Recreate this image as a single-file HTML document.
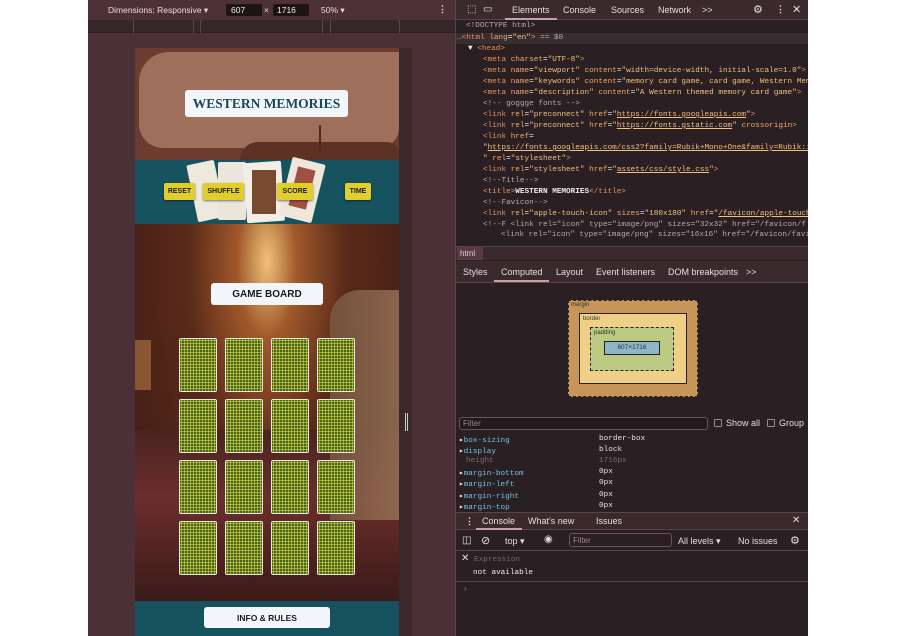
<!DOCTYPE html>
<html><head><meta charset="utf-8"><style>
*{box-sizing:border-box;margin:0;padding:0}
body{width:900px;height:636px;background:#fff;position:relative;overflow:hidden;font-family:"Liberation Sans",sans-serif}
.a{position:absolute}
.mono{font-family:"Liberation Mono",monospace;font-size:7.7px;white-space:nowrap}
.btn{position:absolute;background:#e0cf2a;border-radius:2px;font-weight:bold;font-size:7px;color:#1a1a1a;display:flex;align-items:center;justify-content:center;box-shadow:0 1px 2px rgba(0,0,0,.5)}
.card{position:absolute;width:38px;height:54px;border:1.5px solid #e8e8e0;border-radius:2px;background:#6f8b2e;background-image:radial-gradient(#c9c43a 0.8px,transparent 1px),radial-gradient(#2f4a14 0.7px,transparent 1px);background-size:3px 3px,3px 3px;background-position:0 0,1.5px 1.5px}
.wbtn{position:absolute;background:#f2f6fa;border-radius:3px;font-weight:bold;color:#1b1b1b;display:flex;align-items:center;justify-content:center}
.t{color:#e7dede;font-size:9px}
.tag{color:#e3935f}.at{color:#f2a76a}.av{color:#f1c080}.cm{color:#b9a9ab}.tx{color:#eee}
.p{color:#6fc3e0}.v{color:#e8e0e0}
#dt{position:absolute;left:455px;top:0;width:353px;height:636px;overflow:hidden;background:#2a1f22;border-left:1px solid #5a4448}
#dt .a{margin-left:-455px}
</style></head><body>
<!-- browser left region -->
<div class="a" style="left:88px;top:0;width:367px;height:636px;background:#4b3137"></div>
<div class="a" style="left:88px;top:0;width:367px;height:20px;background:#4e3039"></div>
<div class="a t" style="left:108px;top:5px;font-size:8.5px">Dimensions: Responsive ▾</div>
<div class="a" style="left:226px;top:4px;width:36px;height:12px;background:#1e1416;border-radius:2px;color:#eee;font-size:8.5px;padding-left:5px;line-height:12px">607</div>
<div class="a t" style="left:264px;top:5px;font-size:8.5px">×</div>
<div class="a" style="left:273px;top:4px;width:36px;height:12px;background:#1e1416;border-radius:2px;color:#eee;font-size:8.5px;padding-left:4px;line-height:12px">1716</div>
<div class="a t" style="left:321px;top:5px;font-size:8.5px">50% ▾</div>
<div class="a t" style="left:438px;top:4px;font-weight:bold">⋮</div>
<div class="a" style="left:88px;top:20px;width:367px;height:13px;background:#35262a;border-bottom:1px solid #2a1e21"></div>
<div class="a" style="left:133px;top:20px;width:1px;height:13px;background:#5a464a"></div>
<div class="a" style="left:193px;top:20px;width:1px;height:13px;background:#5a464a"></div>
<div class="a" style="left:200px;top:20px;width:1px;height:13px;background:#5a464a"></div>
<div class="a" style="left:322px;top:20px;width:1px;height:13px;background:#5a464a"></div>
<div class="a" style="left:330px;top:20px;width:1px;height:13px;background:#5a464a"></div>
<div class="a" style="left:399px;top:20px;width:1px;height:13px;background:#5a464a"></div>
<div class="a" style="left:399px;top:48px;width:13px;height:588px;background:#3b282c"></div>
<div class="a" style="left:405px;top:413px;width:1px;height:18px;background:#ccc"></div>
<div class="a" style="left:407px;top:413px;width:1px;height:18px;background:#ccc"></div>

<!-- page -->
<div class="a" style="left:135px;top:48px;width:264px;height:112px;background:#6a3d2e"></div>
<div class="a" style="left:139px;top:52px;width:260px;height:96px;background:#9e6f5b;border-radius:30px 0 20px 24px"></div>
<div class="a" style="left:240px;top:142px;width:159px;height:18px;background:#5b3224;border-radius:30px 20px 0 0"></div>
<div class="a" style="left:319px;top:125px;width:2px;height:25px;background:#4a2a1e"></div>
<div class="a" style="left:185px;top:90px;width:163px;height:27px;background:#f2f6fa;border-radius:3px;display:flex;align-items:center;justify-content:center;font-family:'Liberation Serif',serif;font-weight:bold;font-size:13.5px;color:#184a52">WESTERN MEMORIES</div>
<div class="a" style="left:135px;top:160px;width:264px;height:64px;background:#17535e"></div>
<div class="a" style="left:192px;top:162px;width:28px;height:58px;background:#efe8dc;transform:rotate(-12deg);border-radius:2px"></div>
<div class="a" style="left:218px;top:162px;width:28px;height:58px;background:#ece6da;border-radius:2px"></div>
<div class="a" style="left:245px;top:162px;width:38px;height:60px;background:#f2eee6;border-radius:2px;transform:rotate(-4deg)"></div>
<div class="a" style="left:252px;top:170px;width:24px;height:44px;background:#7a4a30"></div>
<div class="a" style="left:285px;top:160px;width:34px;height:60px;background:#efe7dc;transform:rotate(14deg);border-radius:2px"></div>
<div class="a" style="left:293px;top:168px;width:18px;height:40px;background:#a05040;transform:rotate(14deg)"></div>
<div class="btn" style="left:164px;top:183px;width:31px;height:17px">RESET</div>
<div class="btn" style="left:203px;top:183px;width:41px;height:17px">SHUFFLE</div>
<div class="btn" style="left:277px;top:183px;width:36px;height:17px">SCORE</div>
<div class="btn" style="left:345px;top:183px;width:26px;height:17px">TIME</div>

<div class="a" style="left:135px;top:224px;width:264px;height:377px;background:radial-gradient(ellipse at 50% 10%,#f0c27a 0,#a0582a 16%,#5a2a1a 42%,#3a1a14 100%)"></div>
<div class="a" style="left:135px;top:430px;width:264px;height:171px;background:linear-gradient(#4a2420,#6b2e2c 40%,#3a1a18)"></div>
<div class="a" style="left:330px;top:290px;width:69px;height:230px;background:linear-gradient(90deg,#7a5a44,#9a7458);border-radius:30px 0 0 0;opacity:.8"></div>
<div class="a" style="left:135px;top:340px;width:16px;height:50px;background:#c88a50;opacity:.5"></div>
<div class="wbtn" style="left:211px;top:283px;width:112px;height:22px;font-size:10px">GAME BOARD</div>
<div class="card" style="left:179px;top:338px"></div><div class="card" style="left:225px;top:338px"></div><div class="card" style="left:271px;top:338px"></div><div class="card" style="left:317px;top:338px"></div>
<div class="card" style="left:179px;top:399px"></div><div class="card" style="left:225px;top:399px"></div><div class="card" style="left:271px;top:399px"></div><div class="card" style="left:317px;top:399px"></div>
<div class="card" style="left:179px;top:460px"></div><div class="card" style="left:225px;top:460px"></div><div class="card" style="left:271px;top:460px"></div><div class="card" style="left:317px;top:460px"></div>
<div class="card" style="left:179px;top:521px"></div><div class="card" style="left:225px;top:521px"></div><div class="card" style="left:271px;top:521px"></div><div class="card" style="left:317px;top:521px"></div>
<div class="a" style="left:135px;top:601px;width:264px;height:35px;background:#17535e"></div>
<div class="wbtn" style="left:204px;top:607px;width:126px;height:21px;font-size:8.5px">INFO &amp; RULES</div>

<!-- devtools -->
<div id="dt">
<div class="a" style="left:455px;top:0;width:353px;height:20px;background:#3a2a2e;border-bottom:1px solid #5a4448"></div>
<div class="a t" style="left:466px;top:4px;font-size:10px">⬚</div>
<div class="a t" style="left:482px;top:4px;font-size:10px">▭</div>
<div class="a t" style="left:511px;top:5px">Elements</div>
<div class="a" style="left:504px;top:18px;width:52px;height:2px;background:#c8a0a8"></div>
<div class="a t" style="left:562px;top:5px">Console</div>
<div class="a t" style="left:610px;top:5px">Sources</div>
<div class="a t" style="left:657px;top:5px">Network</div>
<div class="a t" style="left:701px;top:5px">&gt;&gt;</div>
<div class="a t" style="left:752px;top:3px;font-size:11px">⚙</div>
<div class="a t" style="left:775px;top:4px;font-weight:bold">⋮</div>
<div class="a t" style="left:791px;top:3px;font-size:11px">✕</div>
<div class="a" style="left:455px;top:33px;width:353px;height:11px;background:#3a2d30"></div>
<div class="a mono cm" style="left:465px;top:22px">&lt;!DOCTYPE html&gt;</div>
<div class="a mono" style="left:456px;top:34px"><span class="cm">…</span><span class="tag">&lt;html </span><span class="at">lang</span><span class="tx">=</span><span class="av">"en"</span><span class="tag">&gt;</span> <span class="cm">== $0</span></div>
<div class="a mono" style="left:467px;top:45px"><span class="tx">▼ </span><span class="tag">&lt;head&gt;</span></div>
<div class="a mono" style="left:482px;top:56px"><span class="tag">&lt;meta </span><span class="at">charset</span><span class="tx">=</span><span class="av">"UTF-8"</span><span class="tag">&gt;</span></div>
<div class="a mono" style="left:482px;top:67px"><span class="tag">&lt;meta </span><span class="at">name</span><span class="tx">=</span><span class="av">"viewport"</span> <span class="at">content</span><span class="tx">=</span><span class="av">"width=device-width, initial-scale=1.0"</span><span class="tag">&gt;</span></div>
<div class="a mono" style="left:482px;top:78px"><span class="tag">&lt;meta </span><span class="at">name</span><span class="tx">=</span><span class="av">"keywords"</span> <span class="at">content</span><span class="tx">=</span><span class="av">"memory card game, card game, Western Mem</span></div>
<div class="a mono" style="left:482px;top:89px"><span class="tag">&lt;meta </span><span class="at">name</span><span class="tx">=</span><span class="av">"description"</span> <span class="at">content</span><span class="tx">=</span><span class="av">"A Western themed memory card game"</span><span class="tag">&gt;</span></div>
<div class="a mono cm" style="left:482px;top:100px">&lt;!-- goggge fonts --&gt;</div>
<div class="a mono" style="left:482px;top:111px"><span class="tag">&lt;link </span><span class="at">rel</span><span class="tx">=</span><span class="av">"preconnect"</span> <span class="at">href</span><span class="tx">=</span><span class="av">"<u>https://fonts.googleapis.com</u>"</span><span class="tag">&gt;</span></div>
<div class="a mono" style="left:482px;top:122px"><span class="tag">&lt;link </span><span class="at">rel</span><span class="tx">=</span><span class="av">"preconnect"</span> <span class="at">href</span><span class="tx">=</span><span class="av">"<u>https://fonts.gstatic.com</u>"</span> <span class="at">crossorigin</span><span class="tag">&gt;</span></div>
<div class="a mono" style="left:482px;top:133px"><span class="tag">&lt;link </span><span class="at">href</span><span class="tx">=</span></div>
<div class="a mono av" style="left:482px;top:144px">"<u>https://fonts.googleapis.com/css2?family=Rubik+Mono+One&amp;family=Rubik:i</u></div>
<div class="a mono" style="left:482px;top:155px"><span class="av">" </span><span class="at">rel</span><span class="tx">=</span><span class="av">"stylesheet"</span><span class="tag">&gt;</span></div>
<div class="a mono" style="left:482px;top:166px"><span class="tag">&lt;link </span><span class="at">rel</span><span class="tx">=</span><span class="av">"stylesheet"</span> <span class="at">href</span><span class="tx">=</span><span class="av">"<u>assets/css/style.css</u>"</span><span class="tag">&gt;</span></div>
<div class="a mono cm" style="left:482px;top:177px">&lt;!--Title--&gt;</div>
<div class="a mono" style="left:482px;top:188px"><span class="tag">&lt;title&gt;</span><span class="tx" style="font-weight:bold">WESTERN MEMORIES</span><span class="tag">&lt;/title&gt;</span></div>
<div class="a mono cm" style="left:482px;top:199px">&lt;!--Favicon--&gt;</div>
<div class="a mono" style="left:482px;top:210px"><span class="tag">&lt;link </span><span class="at">rel</span><span class="tx">=</span><span class="av">"apple-touch-icon"</span> <span class="at">sizes</span><span class="tx">=</span><span class="av">"180x180"</span> <span class="at">href</span><span class="tx">=</span><span class="av">"<u>/favicon/apple-touch</u></span></div>
<div class="a mono cm" style="left:482px;top:221px">&lt;!--F  &lt;link rel="icon" type="image/png" sizes="32x32" href="/favicon/f</div>
<div class="a mono cm" style="left:500px;top:231px">&lt;link rel="icon" type="image/png" sizes="16x16" href="/favicon/favi</div>
<div class="a" style="left:455px;top:246px;width:353px;height:14px;background:#3a2a2e;border-top:1px solid #5a4448"></div>
<div class="a" style="left:456px;top:247px;width:26px;height:13px;background:#5a3a44;color:#e7c9d0;font-size:8px;padding:2px 3px">html</div>
<div class="a" style="left:455px;top:261px;width:353px;height:22px;background:#3a2a2e;border-bottom:1px solid #5a4448"></div>
<div class="a t" style="left:462px;top:267px">Styles</div>
<div class="a t" style="left:500px;top:267px">Computed</div>
<div class="a" style="left:493px;top:280px;width:55px;height:2px;background:#c8a0a8"></div>
<div class="a t" style="left:555px;top:267px">Layout</div>
<div class="a t" style="left:595px;top:267px">Event listeners</div>
<div class="a t" style="left:667px;top:267px">DOM breakpoints</div>
<div class="a t" style="left:745px;top:267px">&gt;&gt;</div>
<div class="a" style="left:567px;top:300px;width:130px;height:97px;background:#c99659;border:1px dashed #222"></div>
<div class="a" style="left:570px;top:302px;font-size:6px;color:#333">margin</div>
<div class="a" style="left:578px;top:313px;width:108px;height:71px;background:#f0cf86;border:1px solid #222"></div>
<div class="a" style="left:582px;top:316px;font-size:6px;color:#333">border</div>
<div class="a" style="left:589px;top:327px;width:84px;height:44px;background:#bcca83;border:1px dashed #222"></div>
<div class="a" style="left:593px;top:330px;font-size:6px;color:#333">padding</div>
<div class="a" style="left:603px;top:341px;width:56px;height:14px;background:#8db6c8;border:1px solid #222;font-size:6.5px;color:#333;text-align:center;line-height:12px">607×1716</div>
<div class="a" style="left:458px;top:417px;width:249px;height:13px;border:1px solid #6a5458;border-radius:3px;background:#221a1c;color:#9a8a8c;font-size:8px;padding:1px 3px">Filter</div>
<div class="a" style="left:713px;top:419px;width:8px;height:8px;border:1px solid #9a8a8c;border-radius:1px"></div>
<div class="a t" style="left:725px;top:418px">Show all</div>
<div class="a" style="left:766px;top:419px;width:8px;height:8px;border:1px solid #9a8a8c;border-radius:1px"></div>
<div class="a t" style="left:778px;top:418px">Group</div>
<div class="a mono" style="left:458px;top:435px"><span class="tx">▸</span><span class="p">box-sizing</span></div><div class="a mono v" style="left:598px;top:435px">border-box</div>
<div class="a mono" style="left:458px;top:446px"><span class="tx">▸</span><span class="p">display</span></div><div class="a mono v" style="left:598px;top:446px">block</div>
<div class="a mono cm" style="left:465px;top:457px;color:#7a6a6c">height</div><div class="a mono" style="left:598px;top:457px;color:#7a6a6c">1716px</div>
<div class="a mono" style="left:458px;top:468px"><span class="tx">▸</span><span class="p">margin-bottom</span></div><div class="a mono v" style="left:598px;top:468px">0px</div>
<div class="a mono" style="left:458px;top:479px"><span class="tx">▸</span><span class="p">margin-left</span></div><div class="a mono v" style="left:598px;top:479px">0px</div>
<div class="a mono" style="left:458px;top:491px"><span class="tx">▸</span><span class="p">margin-right</span></div><div class="a mono v" style="left:598px;top:491px">0px</div>
<div class="a mono" style="left:458px;top:502px"><span class="tx">▸</span><span class="p">margin-top</span></div><div class="a mono v" style="left:598px;top:502px">0px</div>
<div class="a" style="left:455px;top:512px;width:353px;height:18px;background:#3a2a2e;border-top:1px solid #5a4448;border-bottom:1px solid #5a4448"></div>
<div class="a t" style="left:464px;top:516px;font-weight:bold">⋮</div>
<div class="a t" style="left:481px;top:516px">Console</div>
<div class="a" style="left:475px;top:528px;width:46px;height:2px;background:#c8a0a8"></div>
<div class="a t" style="left:527px;top:516px">What's new</div>
<div class="a t" style="left:595px;top:516px">Issues</div>
<div class="a t" style="left:791px;top:515px;font-size:10px">✕</div>
<div class="a t" style="left:461px;top:535px;font-size:10px">◫</div>
<div class="a t" style="left:480px;top:534px;font-size:11px">⊘</div>
<div class="a t" style="left:504px;top:536px">top ▾</div>
<div class="a t" style="left:543px;top:534px;font-size:10px">◉</div>
<div class="a" style="left:568px;top:533px;width:103px;height:14px;border:1px solid #6a5458;border-radius:3px;color:#9a8a8c;font-size:8px;padding:2px 3px">Filter</div>
<div class="a t" style="left:677px;top:536px">All levels ▾</div>
<div class="a t" style="left:737px;top:536px">No issues</div>
<div class="a t" style="left:789px;top:534px;font-size:11px">⚙</div>
<div class="a" style="left:455px;top:550px;width:353px;height:1px;background:#5a4448"></div>
<div class="a t" style="left:460px;top:553px;font-size:10px">✕</div>
<div class="a mono" style="left:473px;top:556px;color:#7a6a6c">Expression</div>
<div class="a mono tx" style="left:472px;top:569px">not available</div>
<div class="a" style="left:455px;top:581px;width:353px;height:1px;background:#5a4448"></div>
<div class="a" style="left:463px;top:584px;color:#9a8a8c;font-size:8px">›</div>
</div>
</body></html>
